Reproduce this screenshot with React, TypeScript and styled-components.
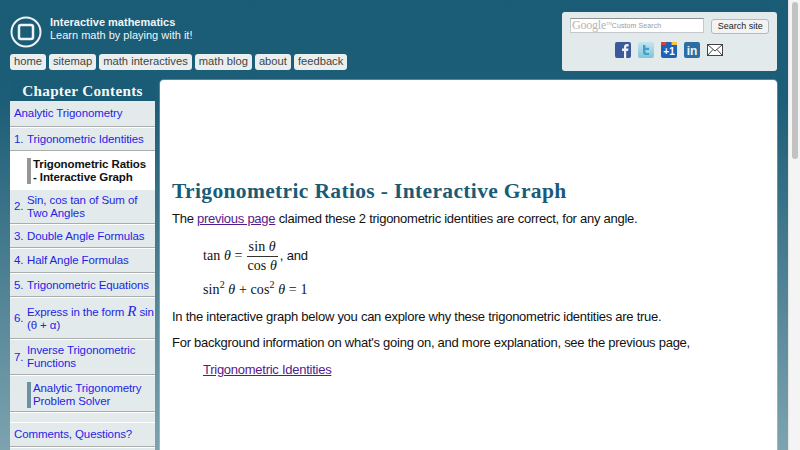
import React, { FC } from 'react'
import styled, { createGlobalStyle } from 'styled-components'

const GlobalStyle = createGlobalStyle`
  html, body {
    margin: 0;
    height: 450px;
    overflow: hidden;
    background: #fff;
  }
`

const Page = styled.div`
  width: 800px;
  height: 450px;
  display: flex;
  overflow: hidden;
  font-family: 'Liberation Sans', Arial, sans-serif;
`

const Site = styled.div`
  width: 788px;
  height: 450px;
  display: flex;
  flex-direction: column;
  background: linear-gradient(180deg, #1a5b75 0, #1c5d77 100px, #7da3af 450px);
`

const ScrollTrack = styled.div`
  width: 12px;
  padding: 2px 3px 0;
  box-sizing: border-box;
  background: #f4f4f4;
  border-left: 1px solid #e4e4e4;
`

const ScrollThumb = styled.div`
  width: 6px;
  height: 157px;
  border-radius: 3px;
  background: #c2c2c2;
`

const Header = styled.header`
  height: 80px;
  box-sizing: border-box;
  display: flex;
  justify-content: space-between;
  align-items: flex-start;
  padding: 12px 11px 0 10px;
`

const Brand = styled.div`
  display: flex;
  flex-direction: column;
  gap: 6px;
  padding-top: 4px;
`

const BrandRow = styled.div`
  display: flex;
  align-items: flex-start;
  gap: 8px;
`

const BrandText = styled.div`
  color: #f1f5f6;
  font-size: 11px;
  line-height: 13px;
  padding-top: 0;
`

const BrandName = styled.div`
  font-weight: bold;
`

const Nav = styled.nav`
  display: flex;
  gap: 3px;
`

const NavItem = styled.a`
  height: 16px;
  padding: 0 4px;
  border-radius: 3px;
  background: #e9eeef;
  color: #444;
  font-size: 11.2px;
  line-height: 15px;
  white-space: nowrap;
`

const SearchPanel = styled.div`
  width: 215px;
  height: 59px;
  box-sizing: border-box;
  padding: 6px 8px 0;
  border-radius: 3px;
  background: #e3eaec;
`

const SearchRow = styled.div`
  display: flex;
  align-items: flex-start;
  gap: 7px;
`

const SearchInput = styled.div`
  width: 135px;
  height: 15px;
  box-sizing: border-box;
  display: flex;
  align-items: center;
  padding-left: 1px;
  background: #fff;
  border: 1px solid #c4c8ca;
  border-top-color: #8d9193;
  white-space: nowrap;
`

const GoogleMark = styled.span`
  color: #b4b4b4;
  font-family: 'Liberation Serif', serif;
  font-size: 12px;
  letter-spacing: -0.2px;
`

const TradeMark = styled.span`
  font-size: 4px;
  vertical-align: 4px;
`

const CustomSearch = styled.span`
  color: #9a9a9a;
  font-size: 7px;
  letter-spacing: 0.1px;
`

const SearchButton = styled.div`
  width: 58px;
  height: 15px;
  box-sizing: border-box;
  margin-top: 1px;
  border: 1px solid #b6b9ba;
  border-radius: 3px;
  background: #f3f3f3;
  color: #222;
  font-size: 9px;
  line-height: 13px;
  text-align: center;
  white-space: nowrap;
`

const SocialRow = styled.div`
  display: flex;
  justify-content: center;
  gap: 7px;
  margin-top: 8px;
  padding-right: 1px;
`

const Columns = styled.div`
  flex: 1;
  min-height: 0;
  display: flex;
  gap: 5px;
  padding: 0 11px 0 10px;
`

const Sidebar = styled.aside`
  width: 145px;
  flex-shrink: 0;
`

const SidebarTitle = styled.h2`
  margin: 0;
  height: 21px;
  border-radius: 4px 4px 0 0;
  background: #1a5b75;
  color: #f6f8f8;
  font-family: 'Liberation Serif', serif;
  font-size: 15.2px;
  font-weight: bold;
  line-height: 21px;
  letter-spacing: 0.3px;
  text-align: center;
`

const MenuItem = styled.a<{ $height: number; $current?: boolean; $sub?: boolean }>`
  display: flex;
  box-sizing: border-box;
  height: ${({ $height }) => $height}px;
  padding: ${({ $sub }) => ($sub ? '6px 0 0 17px' : '0 0 0 4px')};
  align-items: ${({ $sub }) => ($sub ? 'flex-start' : 'center')};
  background: ${({ $current }) => ($current ? '#fff' : '#e3eaec')};
  border-bottom: ${({ $current }) => ($current ? '0' : '1px solid #a9adae')};
  margin-bottom: ${({ $current }) => ($current ? '0' : '1px')};
  box-shadow: ${({ $current }) => ($current ? 'none' : '0 1px 0 #fff')};
  color: #1f1fe6;
  font-size: 11.5px;
  line-height: 13px;
  letter-spacing: -0.1px;
  white-space: nowrap;
`

const MenuGap = styled.div`
  height: 10px;
  box-sizing: border-box;
  background: #e3eaec;
  border-bottom: 1px solid #fff;
`

const ItemNumber = styled.span`
  width: 13px;
  flex-shrink: 0;
`

const SubLabel = styled.span<{ $current?: boolean }>`
  border-left: 4px solid ${({ $current }) => ($current ? '#969696' : '#6c929f')};
  padding-left: 2px;
  color: ${({ $current }) => ($current ? '#111' : '#1f1fe6')};
  font-weight: ${({ $current }) => ($current ? 'bold' : 'normal')};
`

const ItalicR = styled.i`
  font-family: 'Liberation Serif', serif;
  font-size: 15px;
`

const Main = styled.main`
  width: 617px;
  border-radius: 4px 4px 0 0;
  background: #fff;
  box-shadow: 0 0 0 1px rgba(255, 255, 255, 0.25);
  padding: 99px 12px 0;
  box-sizing: border-box;
  color: #111;
  font-size: 13px;
  line-height: 18px;
  letter-spacing: -0.26px;
`

const Title = styled.h1`
  margin: 0 0 7px;
  color: #1a5b75;
  font-family: 'Liberation Serif', serif;
  font-size: 21.5px;
  font-weight: bold;
  line-height: 24px;
  letter-spacing: 0.35px;
`

const Paragraph = styled.p`
  margin: 0 0 8.5px;
`

const TextLink = styled.a`
  color: #551a8b;
  text-decoration: underline;
`

const Formula = styled.div<{ $after: number }>`
  display: flex;
  align-items: center;
  padding-top: 1px;
  margin: 0 0 ${({ $after }) => $after}px 31px;
  font-family: 'Liberation Serif', serif;
  font-size: 14px;
  line-height: 18px;
  letter-spacing: 0.1px;
  white-space: pre;
`

const Fraction = styled.span`
  display: inline-flex;
  flex-direction: column;
  align-items: center;
  margin: 0 2px 0 4px;
  line-height: 17px;
`

const Numerator = styled.span`
  padding: 0 2px 1px;
  border-bottom: 1px solid #333;
`

const AfterFormula = styled.span`
  font-family: 'Liberation Sans', Arial, sans-serif;
  font-size: 13px;
  letter-spacing: -0.2px;
`

const Sup = styled.sup`
  font-size: 10px;
  line-height: 0;
`

const IndentedLink = styled.div`
  margin-left: 31px;
`

const FacebookIcon: FC = () => (
  <svg width="16" height="16" viewBox="0 0 16 16">
    <rect width="16" height="16" rx="2" fill="#3b5a9c" />
    <path d="M9 16V9H7V6.6h2V5c0-2 1.2-3 3-3h1.6v2.4H12.400c-.9 0-1.200.4-1.200 1.100v1.100h2.300L13.100 9h-1.900v7z" fill="#eef1f7" />
  </svg>
)

const TwitterIcon: FC = () => (
  <svg width="16" height="16" viewBox="0 0 16 16">
    <defs>
      <linearGradient id="twitterBg" x1="0" y1="0" x2="0" y2="1">
        <stop offset="0" stopColor="#c3e6ef" />
        <stop offset="1" stopColor="#7fc4dc" />
      </linearGradient>
    </defs>
    <rect width="16" height="16" rx="2" fill="url(#twitterBg)" />
    <path d="M5 3h2.400v2.700H11v2.200H7.400v1.900c0 .9.500 1.300 1.300 1.300H11V13H8c-2 0-3-1.100-3-3z" fill="#3f9fc6" />
  </svg>
)

const PlusOneIcon: FC = () => (
  <svg width="16" height="16" viewBox="0 0 16 16">
    <rect width="16" height="16" rx="2" fill="#1c62b9" />
    <rect width="5.500" height="3" fill="#d9413a" />
    <rect x="5.500" width="5" height="3" fill="#1c62b9" />
    <rect x="10.500" width="5.500" height="3" fill="#f4c63d" />
    <text x="8" y="13" textAnchor="middle" fill="#fff" fontFamily="Liberation Sans" fontWeight="bold" fontSize="10">+1</text>
  </svg>
)

const LinkedInIcon: FC = () => (
  <svg width="16" height="16" viewBox="0 0 16 16">
    <rect width="16" height="16" rx="2" fill="#2c6ea3" />
    <text x="8" y="13" textAnchor="middle" fill="#eaf2f8" fontFamily="Liberation Sans" fontWeight="bold" fontSize="12">in</text>
  </svg>
)

const MailIcon: FC = () => (
  <svg width="16" height="16" viewBox="0 0 16 16" fill="#fff" stroke="#444" strokeWidth="1">
    <rect x="0.500" y="2.500" width="15" height="11" />
    <path d="M.5 2.500 8 9l7.500-6.500M.5 13.500 6 7.500M15.500 13.500 10 7.500" fill="none" />
  </svg>
)

const LogoIcon: FC = () => (
  <svg width="32" height="32" viewBox="0 0 32 32" fill="none" stroke="#eef3f5">
    <circle cx="16" cy="16" r="14.500" strokeWidth="2" />
    <rect x="9" y="9" width="14" height="14" rx="2" strokeWidth="2.500" />
  </svg>
)

const navItems = ['home', 'sitemap', 'math interactives', 'math blog', 'about', 'feedback']

const App: FC = () => (
  <Page>
    <GlobalStyle />
    <Site>
      <Header>
        <Brand>
          <BrandRow>
            <LogoIcon />
            <BrandText>
              <BrandName>Interactive mathematics</BrandName>
              Learn math by playing with it!
            </BrandText>
          </BrandRow>
          <Nav>
            {navItems.map(item => (
              <NavItem key={item}>{item}</NavItem>
            ))}
          </Nav>
        </Brand>
        <SearchPanel>
          <SearchRow>
            <SearchInput>
              <GoogleMark>Google<TradeMark>TM</TradeMark></GoogleMark>
              <CustomSearch>Custom Search</CustomSearch>
            </SearchInput>
            <SearchButton>Search site</SearchButton>
          </SearchRow>
          <SocialRow>
            <FacebookIcon />
            <TwitterIcon />
            <PlusOneIcon />
            <LinkedInIcon />
            <MailIcon />
          </SocialRow>
        </SearchPanel>
      </Header>
      <Columns>
        <Sidebar>
          <SidebarTitle>Chapter Contents</SidebarTitle>
          <MenuItem $height={26}>Analytic Trigonometry</MenuItem>
          <MenuItem $height={23}><ItemNumber>1.</ItemNumber>Trigonometric Identities</MenuItem>
          <MenuItem $height={38} $current $sub>
            <SubLabel $current>Trigonometric Ratios<br />- Interactive Graph</SubLabel>
          </MenuItem>
          <MenuItem $height={34}><ItemNumber>2.</ItemNumber><span>Sin, cos tan of Sum of<br />Two Angles</span></MenuItem>
          <MenuItem $height={23}><ItemNumber>3.</ItemNumber>Double Angle Formulas</MenuItem>
          <MenuItem $height={24}><ItemNumber>4.</ItemNumber>Half Angle Formulas</MenuItem>
          <MenuItem $height={23}><ItemNumber>5.</ItemNumber>Trigonometric Equations</MenuItem>
          <MenuItem $height={41}><ItemNumber>6.</ItemNumber><span>Express in the form <ItalicR>R</ItalicR> sin<br />(θ + α)</span></MenuItem>
          <MenuItem $height={35}><ItemNumber>7.</ItemNumber><span>Inverse Trigonometric<br />Functions</span></MenuItem>
          <MenuItem $height={36} $sub>
            <SubLabel>Analytic Trigonometry<br />Problem Solver</SubLabel>
          </MenuItem>
          <MenuGap />
          <MenuItem $height={24}>Comments, Questions?</MenuItem>
          <MenuItem $height={24} />
        </Sidebar>
        <Main>
          <Title>Trigonometric Ratios - Interactive Graph</Title>
          <Paragraph>
            The <TextLink>previous page</TextLink> claimed these 2 trigonometric identities are correct, for any angle.
          </Paragraph>
          <Formula $after={6}>
            <span>tan <i>θ</i> =</span>
            <Fraction>
              <Numerator>sin <i>θ</i></Numerator>
              <span>cos <i>θ</i></span>
            </Fraction>
            <AfterFormula>, and</AfterFormula>
          </Formula>
          <Formula $after={9}>
            <span>sin<Sup>2</Sup> <i>θ</i> + cos<Sup>2</Sup> <i>θ</i> = 1</span>
          </Formula>
          <Paragraph>In the interactive graph below you can explore why these trigonometric identities are true.</Paragraph>
          <Paragraph>For background information on what's going on, and more explanation, see the previous page,</Paragraph>
          <IndentedLink>
            <TextLink>Trigonometric Identities</TextLink>
          </IndentedLink>
        </Main>
      </Columns>
    </Site>
    <ScrollTrack>
      <ScrollThumb />
    </ScrollTrack>
  </Page>
)

export default App
